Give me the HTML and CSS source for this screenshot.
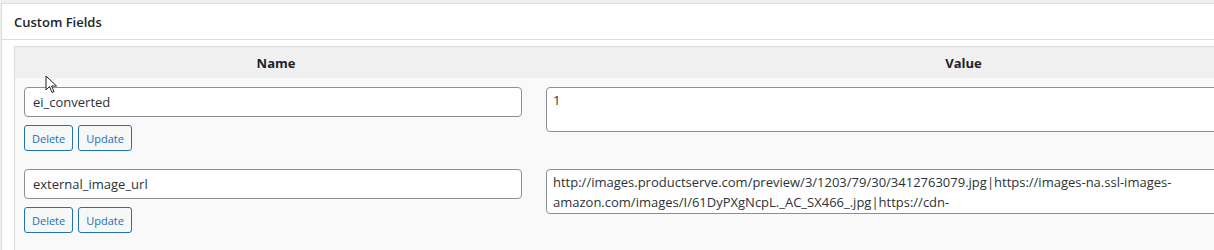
FILE: index.html
```html
<!DOCTYPE html>
<html>
<head>
<meta charset="utf-8">
<link rel="stylesheet" href="styles.css">
</head>
<body>
<div class="postbox">
  <div class="postbox-header"><h2 class="hndle">Custom Fields</h2></div>
  <div class="inside">
    <table class="list-table">
      <thead>
        <tr><th class="col-name">Name</th><th class="col-value">Value</th></tr>
      </thead>
      <tbody>
        <tr>
          <td class="col-name">
            <input class="meta-key" type="text" value="ei_converted">
            <div class="actions"><button class="button-small">Delete</button><button class="button-small">Update</button></div>
          </td>
          <td class="col-value"><textarea class="meta-value" rows="2">1</textarea></td>
        </tr>
        <tr class="last-row">
          <td class="col-name">
            <input class="meta-key" type="text" value="external_image_url">
            <div class="actions"><button class="button-small">Delete</button><button class="button-small">Update</button></div>
          </td>
          <td class="col-value"><textarea class="meta-value" rows="2">http://images.productserve.com/preview/3/1203/79/30/3412763079.jpg|https://images-na.ssl-images-amazon.com/images/I/61DyPXgNcpL._AC_SX466_.jpg|https://cdn-images.productserve.com/preview/3/1203/79/30/3412763079_large.jpg</textarea></td>
        </tr>
      </tbody>
    </table>
  </div>
</div>
<svg class="cursor" width="14" height="20" viewBox="0 0 14 20"><path d="M1 1 L1 15 L4.5 11.5 L7 17.5 L9 16.6 L6.6 11 L11.5 11 Z" fill="#fff" stroke="#222" stroke-width="1"/></svg>
</body>
</html>
```
FILE: styles.css
```css
html, body { margin: 0; padding: 0; }
body {
  background: #f0f0f1;
  font-family: "Open Sans", "Noto Sans", sans-serif;
  color: #1d2327;
  overflow: hidden;
  position: relative;
  height: 250px;
}
.postbox {
  margin: 3px 0 0 1px;
  width: 1420px;
  background: #fff;
  border: 1px solid #dcdcde;
  border-right: 0;
}
.postbox-header {
  height: 35px;
  border-bottom: 1px solid #dcdcde;
  display: flex;
  align-items: center;
}
.hndle {
  margin: 0;
  padding: 0 0 0 12px;
  font-size: 13px;
  font-weight: 600;
  color: #1d2327;
}
.inside {
  padding: 6px 0 0 12px;
}
.list-table {
  border: 1px solid #dcdcde;
  border-right: 0;
  border-spacing: 0;
  width: 1376px;
  table-layout: fixed;
}
.list-table th {
  background: #f0f0f1;
  height: 31px;
  padding: 0;
  font-size: 13px;
  font-weight: 700;
  color: #1d2327;
  text-align: center;
}
.list-table th.col-name { width: 522px; }
.list-table td {
  background: #f9f9f9;
  vertical-align: top;
  padding: 9px 0 9px 9px;
}
.list-table .last-row td { padding-bottom: 40px; }
.meta-key {
  display: block;
  box-sizing: border-box;
  width: 498px;
  height: 30px;
  margin: 0;
  padding: 0 8px;
  border: 1px solid #8c8f94;
  border-radius: 4px;
  font-family: "Open Sans", sans-serif;
  font-size: 13px;
  color: #2c3338;
  background: #fff;
}
.actions {
  display: flex;
  gap: 5px;
  margin-top: 8px;
}
.button-small {
  box-sizing: border-box;
  height: 26px;
  margin: 0;
  padding: 0 7px;
  border: 1px solid #2271b1;
  border-radius: 3px;
  background: #f6f7f7;
  color: #2271b1;
  font-family: "Open Sans", sans-serif;
  font-size: 11px;
}
.meta-value {
  display: block;
  box-sizing: border-box;
  width: 836px;
  height: 45px;
  margin: 0;
  padding: 2px 6px;
  border: 1px solid #8c8f94;
  border-radius: 4px;
  font-family: "Open Sans", sans-serif;
  font-size: 13px;
  line-height: 20px;
  color: #2c3338;
  background: #fff;
  resize: none;
  overflow: hidden;
}
.cursor {
  position: absolute;
  left: 45px;
  top: 75px;
}
```
